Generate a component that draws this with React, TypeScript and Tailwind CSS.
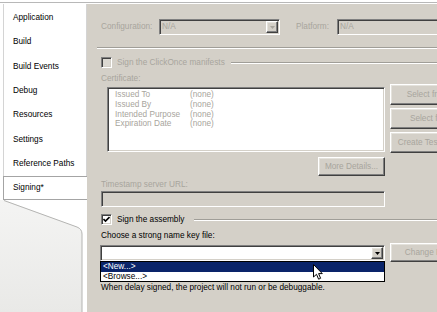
import React from "react";

const DIS = "text-[#a8a59d]";
const SUNKEN =
  "border border-t-[#808080] border-l-[#808080] border-b-white border-r-white shadow-[inset_1px_1px_0_#404040,inset_-1px_-1px_0_#d4d0c8]";
const RAISED =
  "border border-t-white border-l-white border-b-[#404040] border-r-[#404040] shadow-[inset_-1px_-1px_0_#808080,inset_1px_1px_0_#e4e2dc] bg-[#d4d0c8]";

function Arrow({ color }: { color: string }) {
  return (
    <svg width="5" height="3" viewBox="0 0 5 3">
      <path d="M0 0 H5 L2.5 3 Z" fill={color} />
    </svg>
  );
}

function DropBtn({ enabled }: { enabled: boolean }) {
  return (
    <div className={`w-[12px] h-[12px] mr-px flex items-center justify-center ${RAISED}`}>
      <Arrow color={enabled ? "#000" : "#a8a59d"} />
    </div>
  );
}

function Etched({ className = "" }: { className?: string }) {
  return <div className={`h-[2px] border-t border-t-[#a09e98] border-b border-b-white ${className}`} />;
}

function Btn({ label, w, h }: { label: string; w: string; h: string }) {
  return (
    <div className={`${w} ${h} ${RAISED} flex items-center justify-center whitespace-nowrap overflow-hidden ${DIS}`}>
      {label}
    </div>
  );
}

const tabs = ["Application", "Build", "Build Events", "Debug", "Resources", "Settings", "Reference Paths"];

export default function App() {
  return (
    <div className="relative w-[437px] h-[312px] overflow-hidden bg-white text-[8.25px] leading-[10px] text-black font-['Liberation_Sans',Arial,sans-serif] flex flex-col">
      <div className="h-[2px] shrink-0" />
      <div className="h-px shrink-0 bg-[#b8b8b8]" />
      <div className="h-px shrink-0" />
      <div className="flex flex-1 min-h-0">
        {/* left tab column */}
        <div className="w-[87px] shrink-0 flex flex-col bg-white">
          <div className="ml-[3px] border-l border-r border-[#d4d4d4] pt-[2px] flex flex-col">
            {tabs.map((t) => (
              <div key={t} className="h-[24.3px] flex items-center pl-[9px] whitespace-nowrap">
                {t}
              </div>
            ))}
          </div>
          <div className="ml-[3px] h-[24px] shrink-0 border-t border-b border-l border-[#a4a4a4] bg-white flex items-center pl-[9px]">
            Signing*
          </div>
          <svg width="87" height="112" viewBox="0 0 87 112" className="shrink-0">
            <defs>
              <linearGradient id="g" x1="0" y1="0" x2="0" y2="1">
                <stop offset="0" stopColor="#f4f4f3" />
                <stop offset="1" stopColor="#e9e9e7" />
              </linearGradient>
            </defs>
            <path d="M0 0 L4 0 L77 27 Q82 29 82 34 L82 112 L0 112 Z" fill="url(#g)" />
            <path d="M4 0.5 L77 27 Q82 29 82 34 L82 112" fill="none" stroke="#b4b4b2" strokeWidth="1" />
          </svg>
        </div>

        {/* property panel */}
        <div className="w-[480px] shrink-0 bg-[#d4d0c8] pl-[14px] flex flex-col">
          {/* configuration row */}
          <div className="mt-[15px] flex items-center h-[16px]">
            <span className={`w-[58px] ${DIS}`}>Configuration:</span>
            <div className={`w-[121px] h-[16px] ${SUNKEN} flex items-center`}>
              <span className={`flex-1 pl-[2px] ${DIS}`}>N/A</span>
              <DropBtn enabled={false} />
            </div>
            <span className={`ml-[16px] w-[41px] ${DIS}`}>Platform:</span>
            <div className={`w-[150px] h-[16px] ${SUNKEN} flex items-center`}>
              <span className={`pl-[2px] ${DIS}`}>N/A</span>
            </div>
          </div>

          <Etched className="mt-[12px] -ml-[4px]" />

          {/* clickonce */}
          <div className="mt-[8px] h-[11px] flex items-center">
            <div className={`w-[11px] h-[11px] ${SUNKEN} bg-[#dcd9d2]`} />
            <span className={`ml-[5px] whitespace-nowrap ${DIS}`}>Sign the ClickOnce manifests</span>
            <Etched className="flex-1 ml-[6px]" />
          </div>

          <div className={`mt-[6px] ${DIS}`}>Certificate:</div>

          <div className="flex items-start">
            <div className={`ml-[6px] mt-[3px] w-[278px] h-[65px] ${SUNKEN} bg-white pt-[2px] pl-[7px] ${DIS}`}>
              <div className="grid grid-cols-[75px_auto] leading-[9.8px]">
                <span>Issued To</span>
                <span>(none)</span>
                <span>Issued By</span>
                <span>(none)</span>
                <span>Intended Purpose</span>
                <span>(none)</span>
                <span>Expiration Date</span>
                <span>(none)</span>
              </div>
            </div>
            <div className="ml-[5px] flex flex-col gap-[3px]">
              <Btn label="Select from Store..." w="w-[104px]" h="h-[21px]" />
              <Btn label="Select from File..." w="w-[104px]" h="h-[21px]" />
              <Btn label="Create Test Certificate..." w="w-[104px]" h="h-[21px]" />
            </div>
          </div>

          <div className="mt-[4px] w-[284px] flex justify-end">
            <Btn label="More Details..." w="w-[67px]" h="h-[19px]" />
          </div>

          <div className={`mt-[4px] ${DIS}`}>Timestamp server URL:</div>
          <div className={`mt-[1px] w-[284px] h-[16px] ${SUNKEN}`} />

          {/* sign the assembly */}
          <div className="mt-[7px] h-[11px] flex items-center">
            <div className={`w-[11px] h-[11px] ${SUNKEN} bg-white flex items-center justify-center`}>
              <svg width="7" height="7" viewBox="0 0 7 7">
                <path d="M0.5 3 L2.5 5 L6.5 1" fill="none" stroke="#000" strokeWidth="1.6" />
              </svg>
            </div>
            <span className="ml-[5px] whitespace-nowrap">Sign the assembly</span>
            <Etched className="flex-1 ml-[10px]" />
          </div>

          <div className="mt-[6px]">Choose a strong name key file:</div>

          <div className="mt-[4px] flex items-start">
            <div className={`relative -ml-px w-[285px] h-[16px] ${SUNKEN} bg-white flex items-center justify-end`}>
              <DropBtn enabled={true} />
              <div className="absolute left-[-1px] top-[15px] w-[285px] h-[21px] border border-black bg-white flex flex-col z-10">
                <div className="h-[10px] bg-[#0a246a] text-white pl-[2px] leading-[10px]">&lt;New...&gt;</div>
                <div className="h-[9px] pl-[2px] leading-[9px]">&lt;Browse...&gt;</div>
              </div>
            </div>
            <div className="ml-[5px] -mt-[2px]">
              <Btn label="Change Password..." w="w-[104px]" h="h-[19px]" />
            </div>
          </div>

          <div className="mt-[21px] whitespace-nowrap">
            When delay signed, the project will not run or be debuggable.
          </div>
        </div>
      </div>

      {/* mouse cursor */}
      <svg className="absolute left-[313px] top-[264px] z-20" width="11" height="17" viewBox="0 0 11 17">
        <path
          d="M0.5 0.5 L0.5 13 L3.5 10.3 L5.6 15.2 L7.6 14.3 L5.6 9.6 L9.3 9.6 Z"
          fill="#fff"
          stroke="#000"
          strokeWidth="1"
          strokeLinejoin="round"
        />
      </svg>
    </div>
  );
}
